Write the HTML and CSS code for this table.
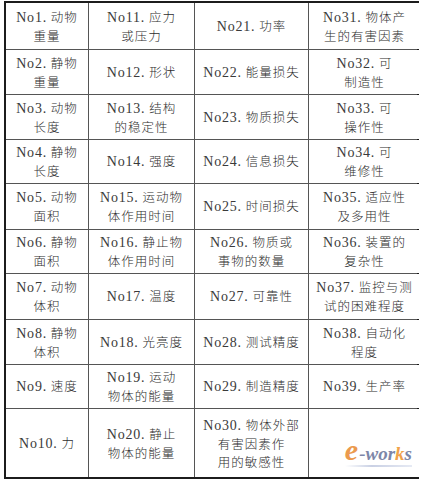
FILE: index.html
```html
<!DOCTYPE html>
<html lang="zh-CN">
<head>
<meta charset="utf-8">
<title>39个通用工程参数</title>
<link rel="stylesheet" href="styles.css">
</head>
<body>
<div class="sheet">
  <div class="cell"><p class="txt"><span class="no">No1.</span> 动物<br>重量</p></div>
  <div class="cell"><p class="txt"><span class="no">No11.</span> 应力<br>或压力</p></div>
  <div class="cell"><p class="txt"><span class="no">No21.</span> 功率</p></div>
  <div class="cell"><p class="txt"><span class="no">No31.</span> 物体产<br>生的有害因素</p></div>

  <div class="cell"><p class="txt"><span class="no">No2.</span> 静物<br>重量</p></div>
  <div class="cell"><p class="txt"><span class="no">No12.</span> 形状</p></div>
  <div class="cell"><p class="txt"><span class="no">No22.</span> 能量损失</p></div>
  <div class="cell"><p class="txt"><span class="no">No32.</span> 可<br>制造性</p></div>

  <div class="cell"><p class="txt"><span class="no">No3.</span> 动物<br>长度</p></div>
  <div class="cell"><p class="txt"><span class="no">No13.</span> 结构<br>的稳定性</p></div>
  <div class="cell"><p class="txt"><span class="no">No23.</span> 物质损失</p></div>
  <div class="cell"><p class="txt"><span class="no">No33.</span> 可<br>操作性</p></div>

  <div class="cell"><p class="txt"><span class="no">No4.</span> 静物<br>长度</p></div>
  <div class="cell"><p class="txt"><span class="no">No14.</span> 强度</p></div>
  <div class="cell"><p class="txt"><span class="no">No24.</span> 信息损失</p></div>
  <div class="cell"><p class="txt"><span class="no">No34.</span> 可<br>维修性</p></div>

  <div class="cell"><p class="txt"><span class="no">No5.</span> 动物<br>面积</p></div>
  <div class="cell"><p class="txt"><span class="no">No15.</span> 运动物<br>体作用时间</p></div>
  <div class="cell"><p class="txt"><span class="no">No25.</span> 时间损失</p></div>
  <div class="cell"><p class="txt"><span class="no">No35.</span> 适应性<br>及多用性</p></div>

  <div class="cell"><p class="txt"><span class="no">No6.</span> 静物<br>面积</p></div>
  <div class="cell"><p class="txt"><span class="no">No16.</span> 静止物<br>体作用时间</p></div>
  <div class="cell"><p class="txt"><span class="no">No26.</span> 物质或<br>事物的数量</p></div>
  <div class="cell"><p class="txt"><span class="no">No36.</span> 装置的<br>复杂性</p></div>

  <div class="cell"><p class="txt"><span class="no">No7.</span> 动物<br>体积</p></div>
  <div class="cell"><p class="txt"><span class="no">No17.</span> 温度</p></div>
  <div class="cell"><p class="txt"><span class="no">No27.</span> 可靠性</p></div>
  <div class="cell"><p class="txt"><span class="no">No37.</span> 监控与测<br>试的困难程度</p></div>

  <div class="cell"><p class="txt"><span class="no">No8.</span> 静物<br>体积</p></div>
  <div class="cell"><p class="txt"><span class="no">No18.</span> 光亮度</p></div>
  <div class="cell"><p class="txt"><span class="no">No28.</span> 测试精度</p></div>
  <div class="cell"><p class="txt"><span class="no">No38.</span> 自动化<br>程度</p></div>

  <div class="cell"><p class="txt"><span class="no">No9.</span> 速度</p></div>
  <div class="cell"><p class="txt"><span class="no">No19.</span> 运动<br>物体的能量</p></div>
  <div class="cell"><p class="txt"><span class="no">No29.</span> 制造精度</p></div>
  <div class="cell"><p class="txt"><span class="no">No39.</span> 生产率</p></div>

  <div class="cell"><p class="txt"><span class="no">No10.</span> 力</p></div>
  <div class="cell"><p class="txt"><span class="no">No20.</span> 静止<br>物体的能量</p></div>
  <div class="cell"><p class="txt"><span class="no">No30.</span> 物体外部<br>有害因素作<br>用的敏感性</p></div>
  <div class="cell cell-logo">
    <div class="logo"><span class="logo-e">e</span><span class="logo-txt">-wor</span><span class="logo-k">k</span><span class="logo-txt">s</span></div>
  </div>
</div>
</body>
</html>
```

FILE: styles.css
```css
html, body {
  margin: 0;
  padding: 0;
  background: #ffffff;
}

body {
  padding: 1px 0 0 4px;
}

.sheet {
  display: grid;
  grid-template-columns: 82px 105px 113px 111px;
  grid-template-rows: 46px 44px 44px 43px 45px 43px 45px 44px 43px 68px;
  gap: 1px;
  width: 411px;
  background: #555555;
  border: 2px solid #1c1c1c;
}

.cell {
  background: #ffffff;
  display: flex;
  align-items: center;
  justify-content: center;
}

.txt {
  margin: 0;
  text-align: center;
  font-family: "Noto Sans CJK SC", sans-serif;
  font-size: 12.5px;
  font-weight: 300;
  letter-spacing: 1px;
  line-height: 18px;
  color: #2e2e2e;
  white-space: nowrap;
}

.no {
  font-family: "Liberation Serif", "Times New Roman", serif;
  font-weight: normal;
  font-size: 14px;
  letter-spacing: 0.8px;
  color: #3a3a3a;
}

.cell-logo {
  position: relative;
}

.logo {
  position: absolute;
  right: 8px;
  bottom: 10px;
  display: flex;
  align-items: baseline;
  font-family: "Liberation Serif", serif;
  font-style: italic;
  font-weight: bold;
  letter-spacing: 0;
  line-height: 1;
  padding-bottom: 2px;
  background: linear-gradient(90deg, rgba(255,255,255,0) 0%, #c9d0e4 40%, #e6eaf4 100%) no-repeat left bottom / 100% 2px;
}

.logo-e {
  font-size: 30px;
  color: #eb9a4e;
  margin-right: 1px;
}

.logo-txt {
  font-size: 19px;
  color: #7d86a8;
}

.logo-k {
  font-size: 19px;
  color: #f0a24a;
}
```
